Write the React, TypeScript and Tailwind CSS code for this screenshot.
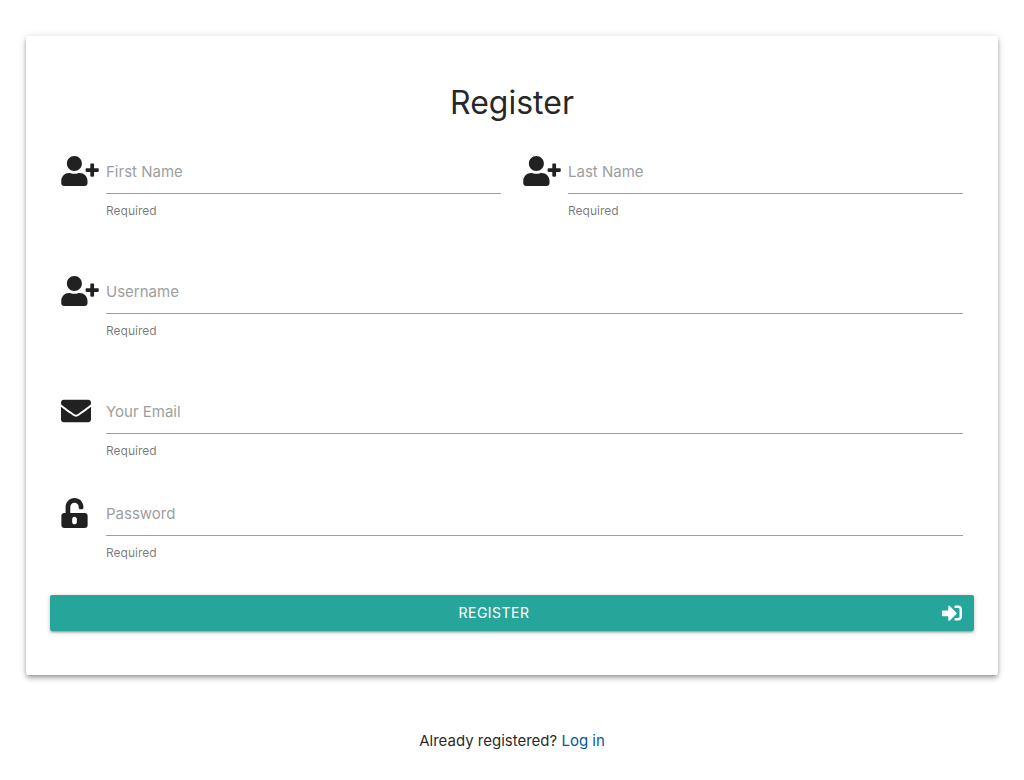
import { useId } from "react";
import type { ReactNode } from "react";
import { FaUserPlus, FaEnvelope, FaUnlockAlt, FaSignInAlt } from "react-icons/fa";

type FieldProps = { label: string; type?: string; icon: ReactNode; className?: string };

function Field({ label, type = "text", icon, className = "" }: FieldProps) {
  const id = useId();
  return (
    <div className={`flex px-[11px] ${className}`}>
      <div className="w-[45px] shrink-0 pt-2 text-[30px]">{icon}</div>
      <div className="min-w-0 grow">
        <div className="grid items-center">
          <input
            id={id}
            type={type}
            placeholder=" "
            className="peer col-start-1 row-start-1 block h-[46px] w-full border-b border-[#9e9e9e] bg-transparent outline-none focus:border-[#26a69a]"
          />
          <label
            htmlFor={id}
            className="pointer-events-none col-start-1 row-start-1 origin-left justify-self-start pt-0.5 text-[#9e9e9e] transition-transform peer-focus:-translate-y-6 peer-focus:scale-80 peer-focus:text-[#26a69a] peer-[:not(:placeholder-shown)]:-translate-y-6 peer-[:not(:placeholder-shown)]:scale-80"
          >
            {label}
          </label>
        </div>
        <span className="mt-2 block text-[12px] leading-[18px] text-black/54">Required</span>
      </div>
    </div>
  );
}

export default function App() {
  return (
    <main className="px-[26px] pt-9 font-[Inter,sans-serif] text-[15px] leading-[22px] text-black/87">
      <form className="rounded-[2px] bg-white px-6 pt-12 pb-11 shadow-[0_4px_5px_0_rgba(0,0,0,0.14),0_1px_10px_0_rgba(0,0,0,0.12),0_2px_4px_-1px_rgba(0,0,0,0.3)]">
        <h1 className="text-center text-[32px] leading-[38px]">Register</h1>
        <div className="mt-[26px] grid grid-cols-2">
          <Field label="First Name" icon={<FaUserPlus className="h-[30px] w-[38px]" />} />
          <Field label="Last Name" icon={<FaUserPlus className="h-[30px] w-[38px]" />} />
        </div>
        <Field className="mt-12" label="Username" icon={<FaUserPlus className="h-[30px] w-[38px]" />} />
        <Field className="mt-12" label="Your Email" type="email" icon={<FaEnvelope />} />
        <Field className="mt-[30px]" label="Password" type="password" icon={<FaUnlockAlt className="h-[30px] w-[27px]" />} />
        <button
          type="submit"
          className="mt-[33px] flex h-9 w-full items-center gap-4 rounded-[2px] bg-[#26a69a] px-3 text-[14px] text-white shadow-[0_2px_2px_0_rgba(0,0,0,0.14),0_3px_1px_-2px_rgba(0,0,0,0.12),0_1px_5px_0_rgba(0,0,0,0.2)]"
        >
          <span className="grow text-center tracking-[0.5px]">REGISTER</span>
          <FaSignInAlt className="text-[20px]" />
        </button>
      </form>
      <p className="mt-[55px] text-center">
        Already registered? <a href="#login" className="text-[#01579b]">Log in</a>
      </p>
    </main>
  );
}
